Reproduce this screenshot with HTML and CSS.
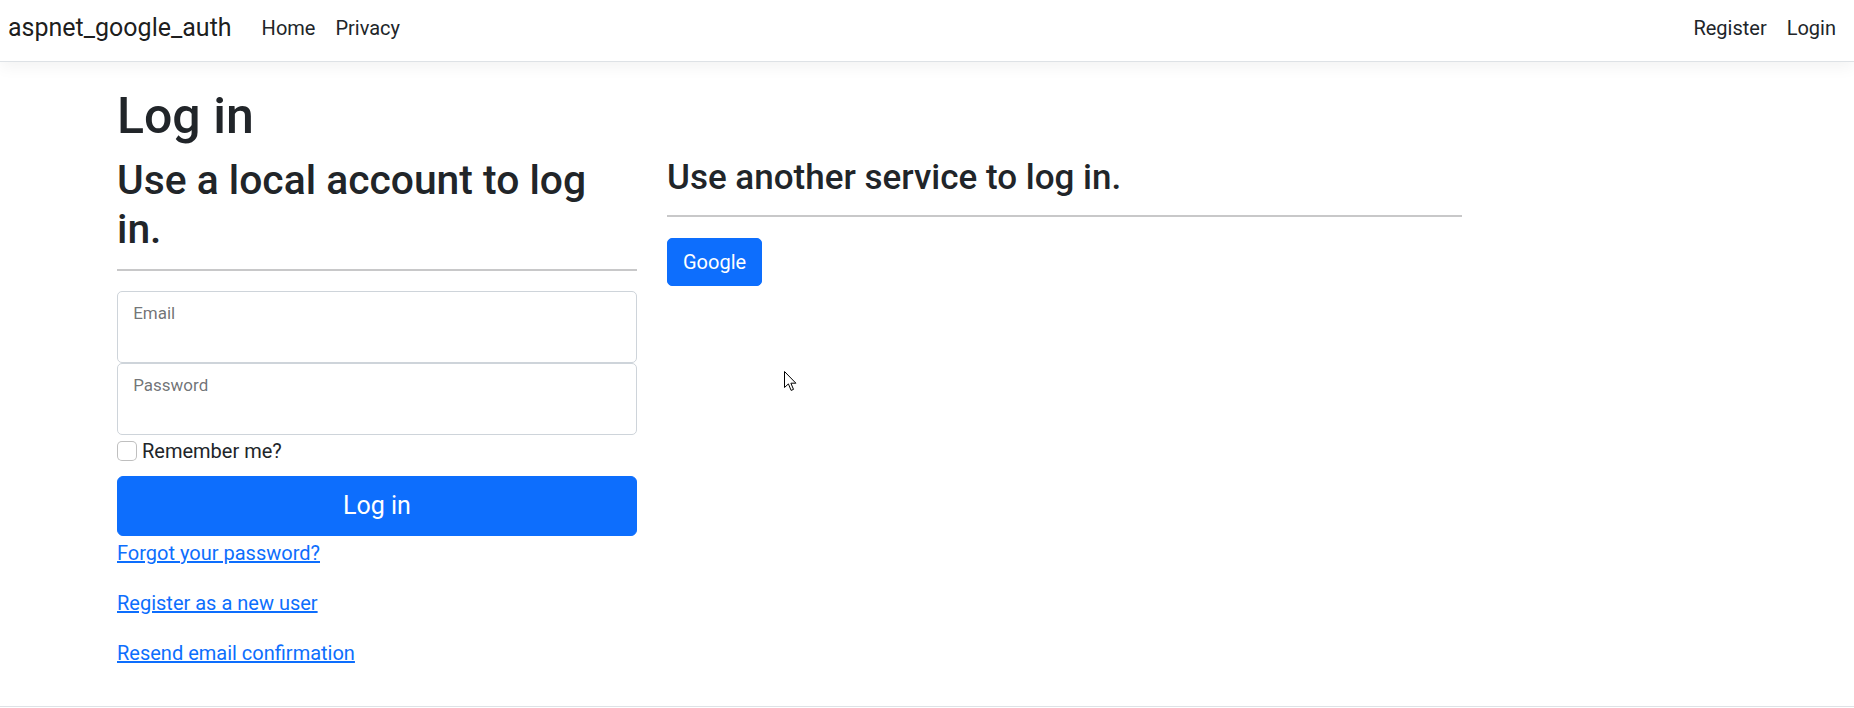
FILE: index.html
```html
<!DOCTYPE html>
<html lang="en">
<head>
<meta charset="utf-8">
<title>Log in - aspnet_google_auth</title>
<link rel="stylesheet" href="styles.css">
</head>
<body>
<header>
  <nav class="navbar">
    <a class="navbar-brand" href="#">aspnet_google_auth</a>
    <ul class="nav">
      <li><a class="nav-link" href="#">Home</a></li>
      <li><a class="nav-link" href="#">Privacy</a></li>
    </ul>
    <ul class="nav nav-right">
      <li><a class="nav-link" href="#">Register</a></li>
      <li><a class="nav-link" href="#">Login</a></li>
    </ul>
  </nav>
</header>
<div class="container">
  <main class="main">
    <h1 class="page-title">Log in</h1>
    <div class="row">
      <div class="col-4">
        <section>
          <form class="login-form">
            <h2 class="section-title">Use a local account to log in.</h2>
            <hr class="divider divider-left">
            <div class="form-floating">
              <input class="form-control" type="email" autocomplete="username">
              <label class="floating-label">Email</label>
            </div>
            <div class="form-floating">
              <input class="form-control" type="password" autocomplete="current-password">
              <label class="floating-label">Password</label>
            </div>
            <div class="checkbox">
              <label class="check-label"><input class="check-input" type="checkbox"> Remember me?</label>
            </div>
            <div>
              <button class="btn btn-primary btn-lg btn-block" type="button">Log in</button>
            </div>
            <div class="links">
              <p class="link-row"><a class="link" href="#">Forgot your password?</a></p>
              <p class="link-row"><a class="link" href="#">Register as a new user</a></p>
              <p class="link-row"><a class="link" href="#">Resend email confirmation</a></p>
            </div>
          </form>
        </section>
      </div>
      <div class="col-6">
        <section>
          <h3 class="service-title">Use another service to log in.</h3>
          <hr class="divider divider-right">
          <div>
            <form class="external-form">
              <p class="ext-row">
                <button class="btn btn-primary" type="button">Google</button>
              </p>
            </form>
          </div>
        </section>
      </div>
    </div>
  </main>
</div>
<footer class="footer"></footer>
<svg class="cursor" width="14" height="22" viewBox="0 0 14 22" aria-hidden="true">
  <path d="M0.5 0.5 L0.5 16.5 L4.4 12.9 L7.1 19.4 L9.5 18.4 L6.9 12.2 L11.9 12.2 Z" fill="#fff" stroke="#000" stroke-width="1" stroke-linejoin="miter"/>
</svg>
</body>
</html>
```

FILE: styles.css
```css
html, body {
  margin: 0;
  padding: 0;
  overflow: hidden;
}

body {
  font-family: Roboto, "Liberation Sans", sans-serif;
  font-size: 20px;
  line-height: 1.5;
  color: #212529;
  background: #fff;
}

/* ---------- navbar ---------- */
.navbar {
  display: flex;
  align-items: center;
  height: 62px;
  padding: 0 8px 5px;
  box-sizing: border-box;
  border-bottom: 1px solid #dee2e6;
  box-shadow: 0 5px 15px rgba(0, 0, 0, 0.05);
  background: #fff;
}

.navbar-brand {
  font-size: 25px;
  line-height: 37.5px;
  color: rgba(0, 0, 0, 0.9);
  text-decoration: none;
  margin-right: 20px;
  white-space: nowrap;
}

.nav {
  display: flex;
  list-style: none;
  margin: 0;
  padding: 0;
}

.nav-right {
  margin-left: auto;
}

.nav-link {
  display: block;
  padding: 0 10px;
  color: #212529;
  text-decoration: none;
}

/* ---------- layout ---------- */
.container {
  width: 1650px;
  margin: 0 auto;
  padding: 0 15px;
  box-sizing: border-box;
}

.main {
  padding: 24px 0 18px;
}

.page-title {
  font-size: 50px;
  line-height: 60px;
  font-weight: 500;
  margin: 0 0 6px;
}

.row {
  display: flex;
  margin: 0 -15px;
}

.col-4 {
  flex: 0 0 33.3333%;
  padding: 0 15px;
  box-sizing: border-box;
}

.col-6 {
  flex: 0 0 50%;
  padding: 0 15px;
  box-sizing: border-box;
}

.section-title {
  font-size: 40.8px;
  line-height: 49px;
  font-weight: 500;
  padding-top: 4px;
  margin: 0;
}

.service-title {
  font-size: 35px;
  line-height: 42px;
  font-weight: 500;
  padding-top: 5px;
  margin: 0;
}

.divider {
  border: 0;
  border-top: 2px solid #c8c8c9;
}

.divider-left {
  margin: 15px 0 20px;
}

.divider-right {
  margin: 16px 0 21px;
}

/* ---------- form ---------- */
.form-floating {
  position: relative;
}

.form-control {
  display: block;
  width: 100%;
  height: 72px;
  box-sizing: border-box;
  padding: 32px 15px 8px;
  font: inherit;
  color: #212529;
  background: #fff;
  border: 1px solid #ced4da;
  border-radius: 5px;
  outline: none;
}

.floating-label {
  position: absolute;
  top: 0;
  left: 0;
  padding: 20px 15px;
  border: 1px solid transparent;
  transform-origin: 0 0;
  transform: scale(0.85) translateY(-10px) translateX(3px);
  color: rgba(33, 37, 41, 0.65);
  pointer-events: none;
  white-space: nowrap;
}

.checkbox {
  margin-bottom: 10px;
  padding-top: 1px;
}

.check-label {
  display: inline-block;
}

.check-input {
  appearance: none;
  -webkit-appearance: none;
  width: 20px;
  height: 20px;
  margin: 5px 0 0;
  vertical-align: top;
  background: #fff;
  border: 1px solid rgba(0, 0, 0, 0.25);
  border-radius: 5px;
  box-sizing: border-box;
}

.btn {
  display: inline-block;
  font-family: inherit;
  font-size: 20px;
  line-height: 30px;
  padding: 8px 15px;
  border: 1px solid transparent;
  border-radius: 5px;
  cursor: pointer;
  box-sizing: border-box;
}

.btn-primary {
  color: #fff;
  background: #0d6efd;
  border-color: #0d6efd;
}

.btn-lg {
  font-size: 25px;
  line-height: 37.5px;
  padding: 10px 20px;
  border-radius: 6px;
  height: 60px;
}

.btn-block {
  display: block;
  width: 100%;
}

.links {
  padding-top: 2px;
}

.link-row {
  margin: 0 0 20px;
}

.link {
  color: #0d6efd;
  text-decoration: underline;
}

.ext-row {
  margin: 0 0 20px;
}

/* ---------- footer ---------- */
.footer {
  border-top: 1px solid #dee2e6;
  height: 20px;
}

.cursor {
  position: absolute;
  left: 784px;
  top: 371px;
}
```
